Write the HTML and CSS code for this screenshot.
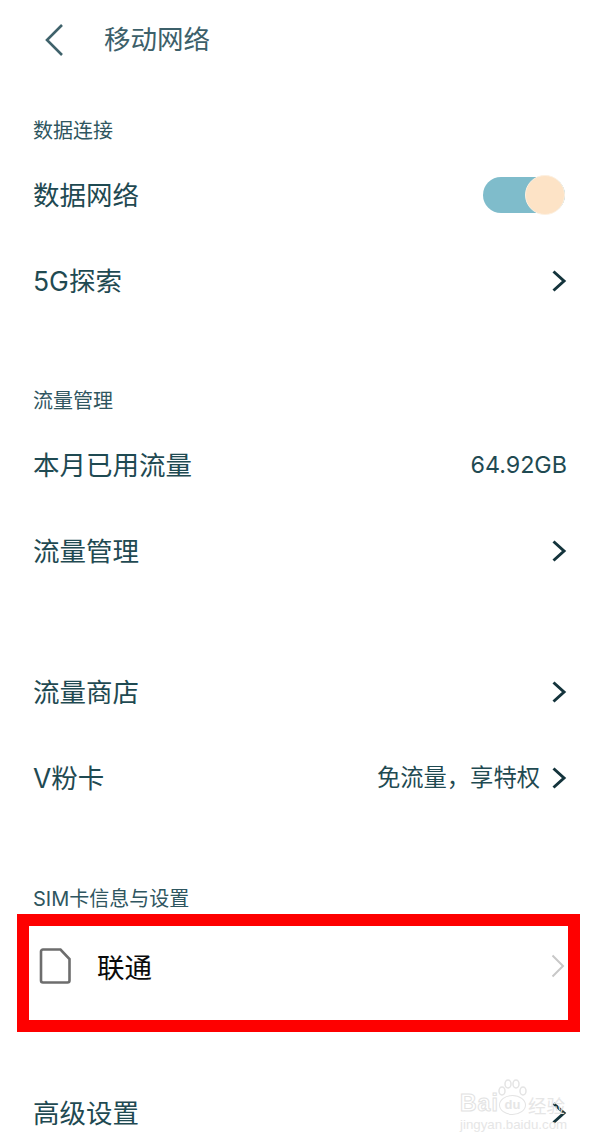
FILE: index.html
```html
<!DOCTYPE html>
<html lang="zh-CN">
<head>
<meta charset="utf-8">
<title>移动网络</title>
<link rel="stylesheet" href="styles.css">
</head>
<body>
<div class="page">
  <header class="header">
    <svg class="back" viewBox="0 0 20 34" width="20" height="34"><path d="M18 2 3 17l15 15"/></svg>
    <h1 class="title">移动网络</h1>
  </header>

  <section class="section first">
    <h2 class="section-title">数据连接</h2>
    <div class="row">
      <span class="label">数据网络</span>
      <span class="toggle"><span class="knob"></span></span>
    </div>
    <div class="row">
      <span class="label">5G探索</span>
      <svg class="chev" viewBox="0 0 16 24" width="16" height="24"><path d="M2.500 2.500 13 12 2.500 21.500"/></svg>
    </div>
  </section>

  <section class="section">
    <h2 class="section-title">流量管理</h2>
    <div class="row">
      <span class="label">本月已用流量</span>
      <span class="value">64.92GB</span>
    </div>
    <div class="row">
      <span class="label">流量管理</span>
      <svg class="chev" viewBox="0 0 16 24" width="16" height="24"><path d="M2.500 2.500 13 12 2.500 21.500"/></svg>
    </div>
  </section>

  <section class="section no-title">
    <div class="row">
      <span class="label">流量商店</span>
      <svg class="chev" viewBox="0 0 16 24" width="16" height="24"><path d="M2.500 2.500 13 12 2.500 21.500"/></svg>
    </div>
    <div class="row">
      <span class="label">V粉卡</span>
      <span class="row-end">
        <span class="value">免流量，享特权</span>
        <svg class="chev" viewBox="0 0 16 24" width="16" height="24"><path d="M2.500 2.500 13 12 2.500 21.500"/></svg>
      </span>
    </div>
  </section>

  <section class="section sim">
    <h2 class="section-title">SIM卡信息与设置</h2>
    <div class="highlight">
      <svg class="sim-icon" viewBox="0 0 32 36" width="32" height="36"><path d="M4 1.500h17.500L30.500 11v21.500a2 2 0 0 1-2 2H4a2 2 0 0 1-2-2v-29a2 2 0 0 1 2-2z"/></svg>
      <span class="sim-name">联通</span>
      <svg class="chev-light" viewBox="0 0 14 24" width="14" height="24"><path d="M1.500 1.500 12 12 1.500 22.500"/></svg>
    </div>
  </section>

  <div class="row last">
    <span class="label">高级设置</span>
    <svg class="chev" viewBox="0 0 16 24" width="16" height="24"><path d="M2.500 2.500 13 12 2.500 21.500"/></svg>
  </div>

  <div class="watermark">
    <svg class="paw" viewBox="0 0 32 26" width="32" height="26">
      <ellipse cx="6" cy="12" rx="3" ry="4"/><ellipse cx="12" cy="5" rx="3" ry="4"/><ellipse cx="20" cy="5" rx="3" ry="4"/><ellipse cx="27" cy="12" rx="3" ry="4"/>
    </svg>
    <span class="wm-latin">Bai</span>
    <span class="wm-du">du</span>
    <span class="wm-cjk">经验</span>
    <span class="wm-url">jingyan.baidu.com</span>
  </div>
</div>
</body>
</html>
```
FILE: styles.css
```css
* { box-sizing: border-box; }
html, body { margin: 0; padding: 0; background: #fff; }
body { font-family: "Inter", "Noto Sans CJK SC", sans-serif; color: #1f4a52; }
.page { position: relative; width: 600px; height: 1145px; overflow: hidden; display: flex; flex-direction: column; }

.header { height: 79px; display: flex; align-items: center; gap: 40px; padding: 0 0 0 44px; flex: none; }
.back { fill: none; stroke: #3f626b; stroke-width: 2.6; }
.title { margin: 0; font-size: 26.5px; font-weight: 400; color: #3c606a; line-height: 1; }

.section { flex: none; }
.section.first { margin: 31px 0 1px; }
.section + .section { margin-top: 55px; }
.section-title { margin: 0; height: 42px; padding-left: 33px; font-size: 20px; font-weight: 400; line-height: 42px; color: #2f5660; }

.row { height: 86px; padding: 0 33px; display: flex; align-items: center; justify-content: space-between; }
.row.last { flex: none; margin-top: 38px; }
.label { font-size: 26.5px; line-height: 1; color: #1f4a52; }
.value { font-size: 23.3px; line-height: 1; color: #1f4a52; }
.row-end { display: flex; align-items: center; gap: 11px; }

.chev { flex: none; fill: none; stroke: #14343c; stroke-width: 3; }

.toggle { position: relative; width: 82px; height: 36px; margin-right: 2px; border-radius: 18px; background: #7fbccb; }
.knob { position: absolute; right: 0; top: -2px; width: 40px; height: 40px; border-radius: 50%; background: #fde3c6; border: 1px solid #fdf0e0; }

.section.sim { margin-top: 60px; }
.sim .section-title { height: 33px; line-height: 36px; }
.highlight { margin-left: 17px; width: 563px; height: 118px; border: 12px solid #fe0000; display: flex; align-items: center; padding: 0 3px 14px 10px; }
.sim-icon { flex: none; fill: none; stroke: #6d6d6d; stroke-width: 2.6; }
.sim-name { margin: 6px 0 0 26px; font-size: 27.5px; line-height: 1; color: #0b0b0b; }
.chev-light { margin-left: auto; flex: none; fill: none; stroke: #c8c8c8; stroke-width: 2; }

.watermark { position: absolute; left: 460px; top: 1079px; width: 108px; height: 52px; color: #e6e6e6; font-family: "Liberation Sans", sans-serif; }
.paw { position: absolute; left: 36px; top: 0; fill: #fff; stroke: #e4e4e4; stroke-width: 1.5; }
.wm-latin { position: absolute; left: 0; top: 13px; font-size: 23px; line-height: 22px; font-weight: 700; letter-spacing: 1px; color: #fff; -webkit-text-stroke: 1px #e2e2e2; }
.wm-du { position: absolute; left: 39px; top: 16px; width: 27px; height: 20px; border: 1.5px solid #e4e4e4; border-radius: 50%; font-size: 13px; line-height: 17px; font-weight: 700; text-align: center; background: #fff; }
.wm-cjk { position: absolute; left: 68px; top: 15px; font-family: "Noto Sans CJK SC", sans-serif; font-size: 18.5px; line-height: 22px; white-space: nowrap; }
.wm-url { position: absolute; left: 0; top: 39px; font-size: 13.3px; line-height: 14px; white-space: nowrap; }
```
